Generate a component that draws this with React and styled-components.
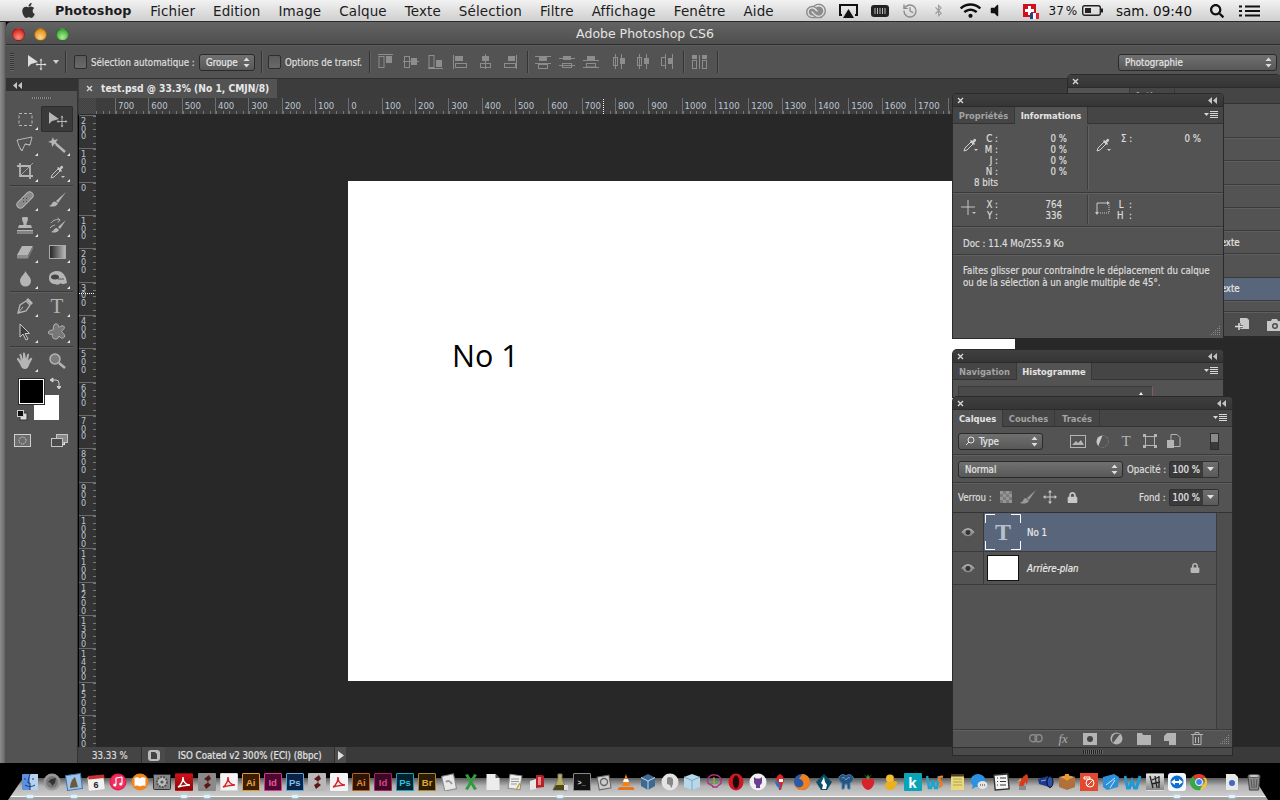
import styled, { createGlobalStyle, css } from "styled-components";
import { FaApple, FaWifi, FaBluetoothB, FaVolumeOff, FaSearch, FaLock } from "react-icons/fa";
import { SiAdobecreativecloud } from "react-icons/si";
import { History } from "lucide-react";

const ui = `"DejaVu Sans", "Liberation Sans", sans-serif`;
const panelText = `"DejaVu Sans Condensed", "DejaVu Sans", sans-serif`;
const ink = css`
  font: 9.65px ${panelText};
  -webkit-text-stroke: 0.2px currentColor;
`;

const GlobalStyle = createGlobalStyle`
  html, body { margin: 0; padding: 0; background: #000; }
  * { box-sizing: border-box; }
  svg { display: block; flex: none; }
`;

const Page = styled.div`
  position: relative;
  width: 1280px;
  height: 800px;
  overflow: hidden;
  display: flex;
  flex-direction: column;
  background: #000;
  font-family: ${panelText};
`;

/* ---------- mac menu bar ---------- */
const MenuBar = styled.div`
  flex: 0 0 22px;
  display: flex;
  align-items: center;
  padding: 0 20px;
  background: linear-gradient(#f2f2f2, #cfcfcf);
  border-bottom: 1px solid #2a2a2a;
  color: #1c1c1c;
  font: 13.5px ${ui};
`;
const MenuList = styled.div`
  display: flex;
  gap: 18px;
  margin-left: 18px;
  letter-spacing: 0.1px;
`;
const AppName = styled.b`
  font-size: 12.7px;
  letter-spacing: 0;
  margin-right: 1px;
`;
const Tray = styled.div`
  margin-left: auto;
  display: flex;
  align-items: center;
`;
const TrayItem = styled.div`
  position: relative;
  display: flex;
  align-items: center;
  margin-left: ${(p) => p.$gap}px;
  color: ${(p) => p.$color || "#111"};
`;
const Percent = styled.span`
  font-size: 12px;
  word-spacing: -2px;
`;
const Flag = styled.div`
  position: relative;
  width: 13px;
  height: 13px;
  background: #d0101c;
  &::before {
    content: "";
    position: absolute;
    left: 2px;
    top: 5px;
    width: 9px;
    height: 3px;
    background: #fff;
  }
  &::after {
    content: "";
    position: absolute;
    left: 5px;
    top: 2px;
    width: 3px;
    height: 9px;
    background: #fff;
  }
`;
const MiniFlag = styled.div`
  position: absolute;
  left: 7px;
  top: 9px;
  width: 9px;
  height: 6px;
  background: linear-gradient(90deg, #25408f 33%, #fff 33%, #fff 66%, #e0202c 66%);
`;

/* ---------- photoshop window ---------- */
const Desktop = styled.div`
  flex: 0 0 741px;
  display: flex;
  min-height: 0;
`;
const Edge = styled.div`
  flex: 0 0 6px;
  background: linear-gradient(90deg, #8d8d8d, #6e6e6e 70%, #4a4a4a);
`;
const Window = styled.div`
  flex: 1;
  min-width: 0;
  display: flex;
  flex-direction: column;
  border-top-left-radius: 5px;
  overflow: hidden;
`;
const TitleBar = styled.div`
  position: relative;
  flex: 0 0 23px;
  display: flex;
  align-items: center;
  justify-content: center;
  padding-left: 4px;
  background: linear-gradient(#636363, #4f4f4f);
  border-bottom: 1px solid #2c2c2c;
  color: #e4e4e4;
  font: 12.5px ${ui};
`;
const Lights = styled.div`
  position: absolute;
  left: 6px;
  top: 6px;
  display: flex;
  gap: 9px;
`;
const Light = styled.div`
  width: 13px;
  height: 13px;
  border-radius: 50%;
  border: 1px solid rgba(0, 0, 0, 0.35);
  background: radial-gradient(circle at 50% 75%, ${(p) => p.$c1}, ${(p) => p.$c2} 75%);
`;
const OptionsBar = styled.div`
  flex: 0 0 34px;
  display: flex;
  align-items: center;
  background: #535353;
  border-bottom: 1px solid #2f2f2f;
  border-top: 1px solid #5e5e5e;
  color: #dedede;
  padding-left: 4px;
  ${ink}
`;
const Grip = styled.div`
  width: 4px;
  height: 18px;
  margin-right: 12px;
  background: repeating-linear-gradient(#333 0 1px, #666 1px 2px);
`;
const DownArrow = styled.svg`
  margin-left: 6px;
`;
const OptSep = styled.div`
  width: 1px;
  height: 22px;
  background: #333;
  box-shadow: 1px 0 0 #616161;
  margin: 0 ${(p) => p.$right ?? 6}px 0 ${(p) => p.$left ?? 6}px;
`;
const Check = styled.div`
  width: 13px;
  height: 14px;
  border-radius: 2px;
  background: linear-gradient(#5a5a5a, #6a6a6a);
  border: 1px solid #2e2e2e;
  margin-right: 4px;
`;
const OptLabel = styled.div`
  width: ${(p) => p.$w}px;
  white-space: nowrap;
`;
const Select = styled.div`
  display: flex;
  align-items: center;
  justify-content: space-between;
  width: ${(p) => p.$w}px;
  height: 17px;
  margin-left: ${(p) => p.$ml ?? "0"};
  margin-right: ${(p) => p.$mr ?? "0"};
  padding: 0 4px 0 6px;
  border-radius: 3px;
  border: 1px solid #2a2a2a;
  background: linear-gradient(#707070, #585858);
  color: #e6e6e6;
  ${ink}
`;
const IconGroup = styled.div`
  display: flex;
  gap: ${(p) => p.$gap}px;
  margin-left: ${(p) => p.$ml ?? 0}px;
`;
const Stepper = () => (
  <svg width="7" height="11" viewBox="0 0 7 11">
    <path d="M3.5 0.5 6.5 4H.5zM3.5 10.5 .5 7h6z" fill="#dcdcdc" />
  </svg>
);

const Workspace = styled.div`
  flex: 1;
  min-height: 0;
  display: flex;
`;
const Toolbox = styled.div`
  flex: 0 0 72px;
  display: flex;
  flex-direction: column;
  background: #535353;
  border-right: 1px solid #333;
`;
const ToolHead = styled.div`
  flex: 0 0 12px;
  display: flex;
  align-items: center;
  padding-left: 7px;
  background: #333;
`;
const ToolGrip = styled.div`
  width: 20px;
  height: 2px;
  margin: 6px auto 7px;
  background: repeating-linear-gradient(90deg, #8a8a8a 0 1px, #444 1px 2px);
`;
const ToolGrid = styled.div`
  display: grid;
  grid-template-columns: repeat(2, 32px);
  grid-auto-rows: 26px;
  justify-content: center;
  margin-left: -1px;
`;
const ToolDivider = styled.div`
  height: 1px;
  margin: ${(p) => p.$mt ?? 2}px 4px ${(p) => p.$mb ?? 3}px;
  background: #393939;
  box-shadow: 0 1px 0 #5e5e5e;
`;
const Tool = styled.div`
  position: relative;
  display: flex;
  align-items: center;
  justify-content: center;
  color: #b5b5b5;
  border-radius: 2px;
  ${(p) => p.$on && "background:#3a3a3a; box-shadow: inset 0 0 0 1px #2e2e2e;"}
  ${(p) =>
    p.$more &&
    `&::after {
      content: "";
      position: absolute;
      right: 3px;
      bottom: 2px;
      border-left: 3px solid transparent;
      border-bottom: 3px solid #e8e8e8;
    }`}
`;
const SerifT = styled.span`
  font: ${(p) => (p.$bold ? "bold " : "")}${(p) => p.$size ?? 21}px "Liberation Serif", serif;
  color: ${(p) => p.$color || "#b5b5b5"};
  line-height: 1;
  -webkit-text-stroke: 0;
`;
const Swatches = styled.div`
  position: relative;
  height: 49px;
  margin-top: 4px;
`;
const Swatch = styled.div`
  position: absolute;
  left: ${(p) => p.$x}px;
  top: ${(p) => p.$y}px;
  width: 25px;
  height: 25px;
  background: ${(p) => p.$c};
  border: 1px solid #fff;
  box-shadow: ${(p) => (p.$c === "#000" ? "0 0 0 1px #2a2a2a" : "none")};
`;
const SwatchMark = styled.div`
  position: absolute;
  left: ${(p) => p.$x}px;
  top: ${(p) => p.$y}px;
`;
const ModeRow = styled.div`
  display: flex;
  justify-content: space-between;
  padding: 0 9px 0 8px;
  margin-top: 7px;
`;

const Main = styled.div`
  flex: 1;
  min-width: 0;
  display: flex;
  flex-direction: column;
`;
const DocTabs = styled.div`
  flex: 0 0 19px;
  display: flex;
  background: #3c3c3c;
  padding-left: 1px;
`;
const DocTab = styled.div`
  width: 198px;
  display: flex;
  align-items: center;
  padding-left: 7px;
  gap: 8px;
  background: #535353;
  color: #e8e8e8;
  font: bold 10.2px ${panelText};
  white-space: nowrap;
`;
const HRuler = styled.div`
  position: relative;
  flex: 0 0 17px;
  display: flex;
  overflow: hidden;
  background: #3d3d3d;
  border-bottom: 1px solid #2a2a2a;
`;
const Corner = styled.div`
  flex: 0 0 17px;
  margin-left: 1px;
  background: repeating-conic-gradient(#4c4c4c 0 25%, #404040 0 50%) 0 0 / 2px 2px;
`;
const HCell = styled.div`
  flex: 0 0 ${(p) => p.$w ?? 33.33}px;
  height: 100%;
  padding: 2px 0 0 2px;
  border-left: ${(p) => (p.$bare ? "0" : "1px solid #6f6f6f")};
  background: repeating-linear-gradient(90deg, #777 0 1px, transparent 1px 6.66px) 0 100% / 100% 3px no-repeat;
  color: #bcc6d4;
  font: 9.5px/11px ${panelText};
  white-space: nowrap;
`;
const Body = styled.div`
  flex: 1;
  min-height: 0;
  display: flex;
`;
const VRuler = styled.div`
  position: relative;
  flex: 0 0 17px;
  margin-left: 1px;
  overflow: hidden;
  background: #333;
`;
const VCell = styled.div`
  height: 33.33px;
  padding: 2px 0 0 2px;
  border-top: 1px solid #6a6a6a;
  background: repeating-linear-gradient(#777 0 1px, transparent 1px 6.66px) 100% 0 / 3px 100% no-repeat;
  color: #bcc6d4;
  font: 9px/7.7px ${panelText};
`;
const Digit = styled.div`
  height: 7.7px;
`;
const Canvas = styled.div`
  flex: 1;
  min-width: 0;
  background: #282828;
  padding: 66px 0 0 252px;
  overflow: hidden;
`;
const Sheet = styled.div`
  width: 667px;
  height: 500px;
  background: #fff;
  padding: 155px 0 0 104px;
  color: #000;
  font: 30.5px/38px "Open Sans", sans-serif;
`;
const Marker = styled.div`
  position: absolute;
  left: ${(p) => p.$x}px;
  top: ${(p) => p.$y}px;
  width: ${(p) => p.$w}px;
  height: ${(p) => p.$h}px;
  background: repeating-linear-gradient(${(p) => (p.$w > 1 ? "90deg" : "0deg")}, #fff 0 1px, #333 1px 2px);
`;
const StatusBar = styled.div`
  flex: 0 0 16px;
  display: flex;
  align-items: center;
  background: #3a3a3a;
  color: #dadada;
  ${ink}
`;
const Zoom = styled.div`
  width: 64px;
  padding-left: 14px;
  height: 100%;
  display: flex;
  align-items: center;
  background: #444;
  border-right: 1px solid #2d2d2d;
`;
const StatusBtn = styled.div`
  width: ${(p) => p.$w}px;
  height: 100%;
  display: flex;
  align-items: center;
  justify-content: center;
  background: ${(p) => p.$bg || "#4a4a4a"};
`;
const StatusText = styled.div`
  width: 170px;
  padding-left: 13px;
  height: 100%;
  display: flex;
  align-items: center;
  background: #444;
  border-right: 1px solid #2d2d2d;
  color: #e2e2e2;
  white-space: nowrap;
`;

/* ---------- floating panels ---------- */
const Float = styled.div`
  position: absolute;
  left: ${(p) => p.$x}px;
  top: ${(p) => p.$y}px;
  width: ${(p) => p.$w}px;
  height: ${(p) => p.$h}px;
  display: flex;
  flex-direction: column;
  background: #535353;
  border-radius: 4px 4px 0 0;
  box-shadow: 0 0 0 1px #2a2a2a;
  color: #dcdcdc;
  overflow: hidden;
  ${ink}
`;
const PanelTitle = styled.div`
  flex: 0 0 13px;
  display: flex;
  align-items: center;
  justify-content: space-between;
  padding: 0 6px 0 4px;
  background: linear-gradient(#3f3f3f, #353535);
  border-bottom: 1px solid #2b2b2b;
`;
const TabBar = styled.div`
  flex: 0 0 ${(p) => p.$h ?? 17}px;
  display: flex;
  align-items: stretch;
  background: #454545;
  border-bottom: 1px solid #333;
  font: bold 9.3px ${panelText};
  -webkit-text-stroke: 0;
`;
const Tab = styled.div`
  position: relative;
  width: ${(p) => p.$w}px;
  display: flex;
  align-items: center;
  justify-content: center;
  color: ${(p) => (p.$on ? "#e4e4e4" : "#a3a3a3")};
  background: ${(p) => (p.$on ? "#535353" : "transparent")};
  border-right: 1px solid #383838;
  margin-bottom: ${(p) => (p.$on ? "-1px" : "0")};
`;
const TabMenu = styled.div`
  margin-left: auto;
  align-self: center;
  padding-right: 4px;
`;
const InfoSection = styled.div`
  position: relative;
  height: ${(p) => p.$h}px;
  display: flex;
  border-bottom: 1px solid #3a3a3a;
  box-shadow: 0 1px 0 #606060;
`;
const InfoCell = styled.div`
  width: ${(p) => p.$w}px;
  display: flex;
  padding: ${(p) => p.$pad};
  ${(p) => p.$div && "border-right: 1px solid #3d3d3d; box-shadow: 1px 0 0 #616161; margin: 2px 0;"}
`;
const IconSlot = styled.div`
  flex: 0 0 ${(p) => p.$w}px;
  min-width: 0;
  padding-top: ${(p) => p.$top ?? 0}px;
`;
const InfoRows = styled.div`
  display: grid;
  grid-template-columns: ${(p) => p.$cols};
  grid-auto-rows: 11px;
  line-height: 11px;
  flex: 1;
`;
const Lab = styled.div`
  text-align: right;
  white-space: pre;
`;
const Val = styled.div`
  text-align: right;
`;
const DocLine = styled.div`
  padding: 11px 0 0 10px;
`;
const HelpText = styled.div`
  padding: 10px 0 0 10px;
  line-height: 12px;
`;
const ResizeGrip = styled.div`
  position: absolute;
  right: 2px;
  bottom: ${(p) => p.$bottom ?? 2}px;
`;
const Rows = styled.div`
  flex: 0 0 auto;
`;
const HistRow = styled.div`
  height: ${(p) => p.$h ?? 23.3}px;
  border-bottom: 1px solid #3a3a3a;
  box-shadow: 0 1px 0 #5f5f5f;
  display: flex;
  align-items: center;
  padding-left: 149px;
  background: ${(p) => (p.$on ? "#58657a" : "transparent")};
  color: #e6e6e6;
`;
const BackFoot = styled.div`
  flex: 1;
  display: flex;
  align-items: center;
  gap: 17px;
  margin-top: 10px;
  padding-left: 167px;
  border-top: 1px solid #3a3a3a;
  box-shadow: inset 0 1px 0 #5f5f5f;
  background: #4c4c4c;
  color: #c8c8c8;
`;
const HistBox = styled.div`
  position: relative;
  width: 195px;
  height: 40px;
  margin: 6px 0 0 5px;
  border: 1px solid #3a3a3a;
  border-right-color: #8a5a5a;
  background: #4a4a4a;
  &::after {
    content: "";
    position: absolute;
    right: 9px;
    top: 5px;
    border-left: 2px solid transparent;
    border-right: 2px solid transparent;
    border-bottom: 3px solid #eee;
  }
`;
const LayerRow = styled.div`
  display: flex;
  align-items: center;
  height: ${(p) => p.$h}px;
  padding: ${(p) => (p.$line ? "1px" : "0")} 13px 0 5px;
  ${(p) => p.$line && "border-bottom: 1px solid #3a3a3a; box-shadow: 0 1px 0 #5f5f5f;"}
`;
const FilterIcons = styled.div`
  display: flex;
  align-items: center;
  margin-left: 23px;
`;
const FilterCell = styled.div`
  width: 24px;
  display: flex;
  justify-content: center;
`;
const SearchGlyph = styled.svg`
  margin-right: 4px;
`;
const SelectName = styled.span`
  flex: 1;
`;
const FilterToggle = styled.div`
  width: 9px;
  height: 17px;
  margin-left: auto;
  border: 1px solid #2e2e2e;
  background: linear-gradient(#8a8a8a 0 50%, #3a3a3a 50%);
`;
const FieldLabel = styled.div`
  margin-left: ${(p) => p.$ml ?? "4px"};
  white-space: nowrap;
  width: ${(p) => p.$w}px;
`;
const Field = styled.div`
  display: flex;
  width: 50px;
  height: 17px;
  margin-left: 3px;
  background: #3a3a3a;
  border: 1px solid #303030;
  border-radius: 2px;
  color: #e6e6e6;
`;
const FieldVal = styled.div`
  flex: 1;
  text-align: right;
  padding-right: 3px;
  line-height: 15px;
  white-space: nowrap;
`;
const FieldBtn = styled.div`
  flex: 0 0 15px;
  display: flex;
  align-items: center;
  justify-content: center;
  background: linear-gradient(#6e6e6e, #5a5a5a);
`;
const LockIcons = styled.div`
  display: flex;
  align-items: center;
  margin-left: 2px;
`;
const LockCell = styled.div`
  width: 22px;
  display: flex;
  justify-content: center;
`;
const ListArea = styled.div`
  flex: 1;
  min-height: 0;
  display: flex;
  border-top: 1px solid #333;
  margin-top: 1px;
`;
const List = styled.div`
  flex: 0 0 264px;
  border-right: 1px solid #3c3c3c;
`;
const Track = styled.div`
  flex: 1;
  background: #4e4e4e;
`;
const Layer = styled.div`
  display: flex;
  height: ${(p) => p.$h}px;
  border-bottom: 1px solid #3a3a3a;
  align-items: stretch;
`;
const EyeCol = styled.div`
  flex: 0 0 31px;
  display: flex;
  justify-content: center;
  padding-top: ${(p) => p.$top}px;
  border-right: 1px solid #3a3a3a;
`;
const LayerMain = styled.div`
  flex: 1;
  display: flex;
  align-items: center;
  gap: ${(p) => p.$gap}px;
  padding-left: ${(p) => p.$pad}px;
  color: #eaeaea;
  background: ${(p) => p.$bg || "transparent"};
  ${(p) => p.$italic && "font-style: italic;"}
`;
const Thumb = styled.div`
  position: relative;
  width: ${(p) => p.$w}px;
  height: ${(p) => p.$h}px;
  display: flex;
  align-items: center;
  justify-content: center;
  background: ${(p) => p.$bg};
  ${(p) => p.$line && "border: 1px solid #111;"}
`;
const Brackets = styled.svg`
  position: absolute;
  inset: 0;
`;
const LayerLock = styled.div`
  margin-left: auto;
  margin-right: 16px;
  color: #b8b8b8;
`;
const LayerFoot = styled.div`
  flex: 0 0 18px;
  display: flex;
  align-items: center;
  border-top: 1px solid #3a3a3a;
  box-shadow: inset 0 1px 0 #616161;
  padding-left: 70px;
`;
const FootCell = styled.div`
  width: 26.8px;
  display: flex;
  justify-content: center;
`;
const FootFx = styled.span`
  font: italic 13px "Liberation Serif", serif;
  -webkit-text-stroke: 0;
  color: #ababab;
`;
const Handle = styled.div`
  flex: 0 0 8px;
  display: flex;
  align-items: center;
  justify-content: center;
  border-top: 1px solid #2f2f2f;
  background: #4a4a4a;
  &::after {
    content: "";
    width: 20px;
    height: 4px;
    background: repeating-linear-gradient(90deg, #222 0 1px, #666 1px 2px);
  }
`;

/* ---------- dock ---------- */
const Dock = styled.div`
  position: relative;
  flex: 1;
  display: flex;
  align-items: flex-start;
  gap: 4.07px;
  padding: 10px 0 0 21px;
  background: #000;
`;
const Shelf = styled.div`
  position: absolute;
  left: 8px;
  right: 12px;
  top: 15px;
  height: 22px;
  background: linear-gradient(#5a5a5a, #b4b4b4 8px, #cccccc 18px, #f8f8f8 18px, #f8f8f8 19px, #a0a0a0 19px);
  clip-path: polygon(1.2% 0, 98.9% 0, 100% 100%, 0 100%);
`;
const Dk = styled.div`
  position: relative;
  z-index: 1;
  flex: 0 0 18px;
  height: 18px;
  margin-left: ${(p) => p.$ml ?? 0}px;
  &::after {
    content: "";
    display: ${(p) => (p.$run ? "block" : "none")};
    position: absolute;
    left: 6px;
    bottom: -7px;
    width: 6px;
    height: 3px;
    background: #dff4ff;
    box-shadow: 0 0 3px #bfe8ff;
  }
`;
const Tile = styled.div`
  width: 18px;
  height: 18px;
  display: flex;
  align-items: center;
  justify-content: center;
  border: 1.5px solid ${(p) => p.$line || "transparent"};
  background: ${(p) => p.$bg};
  color: ${(p) => p.$color || "#fff"};
  font: bold ${(p) => p.$fs || 9.5}px "Liberation Sans", sans-serif;
  border-radius: ${(p) => p.$r ?? 1}px;
`;

/* ---------- drawn icons ---------- */
const CloseX = () => (
  <svg width="7" height="7" viewBox="0 0 7 7">
    <path d="M1 1 6 6M6 1 1 6" stroke="#d6d6d6" strokeWidth="1.4" />
  </svg>
);
const Collapse = () => (
  <svg width="9" height="7" viewBox="0 0 9 7">
    <path d="M4 0 0 3.5 4 7zM9 0 5 3.5 9 7z" fill="#c4c4c4" />
  </svg>
);
const MenuGlyph = () => (
  <svg width="15" height="8" viewBox="0 0 15 8">
    <path d="M0 2h5L2.5 5z" fill="#d8d8d8" />
    <path d="M6 .5h8M6 2.5h8M6 4.5h8M6 6.5h8" stroke="#d8d8d8" />
  </svg>
);
const GripDots = () => (
  <svg width="10" height="10" viewBox="0 0 10 10" fill="#8a8a8a">
    {[[8, 0], [6, 2], [8, 2], [4, 4], [6, 4], [8, 4], [2, 6], [4, 6], [6, 6], [8, 6], [0, 8], [2, 8], [4, 8], [6, 8], [8, 8]].map(([x, y]) => (
      <rect key={`${x}-${y}`} x={x} y={y} width="1" height="1" />
    ))}
  </svg>
);
const Dropper = ({ c = "#d0d0d0" }) => (
  <svg width="17" height="17" viewBox="0 0 17 17">
    <path d="M2 15 3 12 9 6 11 8 5 14z" fill="none" stroke={c} />
    <path d="M9 4 10.5 5 12 3a1.5 1.5 0 0 1 2 2l-2 1.5L13 8 12 9 8 5z" fill={c} />
    <path d="M12 13h4l-2 2z" fill={c} />
  </svg>
);
const Plus = () => (
  <svg width="17" height="17" viewBox="0 0 17 17">
    <path d="M8 1v15M1 8h14" stroke="#c4c4c4" />
    <path d="M12 13h4l-2 2z" fill="#c4c4c4" />
  </svg>
);
const SizeGlyph = () => (
  <svg width="17" height="17" viewBox="0 0 17 17" fill="none">
    <path d="M2 14V4h11" stroke="#c8c8c8" />
    <path d="M12 2l3 2-3 2zM0 13h4l-2 3z" fill="#c8c8c8" />
    <path d="M14 6v8H5" stroke="#c8c8c8" strokeDasharray="1 1" />
  </svg>
);
const Eye = () => (
  <svg width="14" height="9" viewBox="0 0 14 9">
    <path d="M1 4.5C3 1.5 5 .8 7 .8s4 .7 6 3.7C11 7.5 9 8.2 7 8.2s-4-.7-6-3.7z" fill="#8f8f8f" />
    <circle cx="7" cy="4.5" r="2.4" fill="#333" />
    <path d="M1 4.5C3 1.5 5 .8 7 .8s4 .7 6 3.7" fill="none" stroke="#c8c8c8" />
  </svg>
);
const FieldArrow = () => (
  <svg width="7" height="4" viewBox="0 0 7 4">
    <path d="M0 0h7L3.500 4z" fill="#e0e0e0" />
  </svg>
);

const g = "currentColor";
const toolIcons = {
  marquee: <svg width="17" height="17" viewBox="0 0 17 17"><rect x="2" y="2.5" width="13" height="12" fill="none" stroke={g} strokeDasharray="3 2" /></svg>,
  move: (
    <svg width="21" height="17" viewBox="0 0 21 17">
      <path d="M2 1v12l3-3 2-.5 5-1.5z" fill={g} />
      <path d="M15 6v9M11 10.500h8" stroke={g} />
      <path d="M15 4.500 13.500 6.500h3zM15 16.500 13.500 14.500h3zM9.500 10.500 11.500 9v3zM20.500 10.500 18.500 9v3z" fill={g} />
    </svg>
  ),
  lasso: <svg width="19" height="18" viewBox="0 0 19 18" fill="none" stroke={g}><path d="M1 4 16 1 14 9 9 8 6 15 3 10zM6 15 4 12.500M9 8 14 9" /></svg>,
  wand: (
    <svg width="20" height="18" viewBox="0 0 20 18">
      <path d="M9 8 18 16" stroke={g} strokeWidth="2.400" />
      <path d="M6 1 7 4 11 3 9 6 11 9 7.500 8 5 11 4.500 7 1 6 4.500 4.500z" fill={g} />
    </svg>
  ),
  crop: <svg width="18" height="18" viewBox="0 0 18 18" fill="none" stroke={g} strokeWidth="1.800"><path d="M4 1v13h13M1 4h13v13" /><path d="M4 14 17 1" strokeWidth=".8" /></svg>,
  dropper: <Dropper c="#c4c4c4" />,
  bandaid: (
    <svg width="18" height="18" viewBox="0 0 18 18">
      <rect x="-1" y="5.500" width="20" height="7" rx="3.500" fill="#8a8a8a" stroke={g} transform="rotate(-45 9 9)" />
      <path d="M7 7h1v1H7zM10 7h1v1h-1zM7 10h1v1H7zM10 10h1v1h-1z" fill="#444" />
    </svg>
  ),
  brush: (
    <svg width="19" height="18" viewBox="0 0 19 18">
      <path d="M18 1 8 10l2 2z" fill={g} />
      <path d="M7 10.500c-2 0-3 1.500-3.500 3L1 15c3 1 7 1 9-2.500z" fill={g} />
    </svg>
  ),
  stamp: (
    <svg width="18" height="18" viewBox="0 0 18 18" fill={g}>
      <path d="M6 2a3 3 0 0 1 6 0c0 2-1.500 3-1.500 5v1H15l1 3H2l1-3h4.500V7C7.500 5 6 4 6 2z" />
      <rect x="1" y="13" width="16" height="1.500" />
      <rect x="1" y="15.500" width="16" height="1" />
    </svg>
  ),
  history: (
    <svg width="19" height="18" viewBox="0 0 19 18">
      <path d="M18 3 10 10l2 2z" fill={g} />
      <path d="M9 11c-2 0-3 1-3.500 2.500L3 15c3 1 6 1 8-2z" fill={g} />
      <path d="M3 6c2-3 6-4 9-3M12 3 9.500 1M12 3 10 5.500M2 11c1-1.500 3-2.500 5-3" fill="none" stroke={g} />
    </svg>
  ),
  eraser: <svg width="18" height="15" viewBox="0 0 18 15"><path d="M6 1h11l-5 9H1z" fill={g} /><path d="M1 10h11v3.500H1z" fill="#8c8c8c" /><path d="M12 10v3.500L17 4V1z" fill="#777" /></svg>,
  gradient: (
    <svg width="17" height="14" viewBox="0 0 17 14">
      <defs>
        <linearGradient id="grd">
          <stop offset="0" stopColor="#222" />
          <stop offset="1" stopColor="#bbb" />
        </linearGradient>
      </defs>
      <rect x=".5" y=".5" width="16" height="13" fill="url(#grd)" stroke="#aaa" />
    </svg>
  ),
  drop: <svg width="13" height="17" viewBox="0 0 13 17"><path d="M6.500 1c1 3 5.500 6 5.500 10a5.500 5.500 0 0 1-11 0c0-4 4.500-7 5.500-10z" fill={g} /></svg>,
  sponge: (
    <svg width="21" height="16" viewBox="0 0 21 16">
      <path d="M2 8c0-5 4-7 8-7 5 0 7 3 9 7l1 5c-3 1-5 2-6 0-2 2-5 2-6 1-3 0-6-2-6-6z" fill={g} />
      <ellipse cx="8" cy="7" rx="4" ry="2.500" fill="#444" />
      <path d="M11 9h6" stroke="#555" />
    </svg>
  ),
  pen: (
    <svg width="18" height="18" viewBox="0 0 18 18">
      <path d="M2 16 4 8 10 4l4 4-4 6z" fill="none" stroke={g} strokeWidth="1.300" />
      <path d="M2 16 7 10" stroke={g} />
      <path d="M10 3 12 1l5 5-2 2z" fill={g} />
    </svg>
  ),
  path: <svg width="15" height="18" viewBox="0 0 15 18"><path d="M2 1v13l3-3 3 6 2-1-3-5.500h4.500z" fill="#3c3c3c" stroke="#c8c8c8" /></svg>,
  shape: <svg width="20" height="18" viewBox="0 0 20 18"><path d="M8 1c2-1 4 1 3.500 3 1.500.5 3-2 5-1 2 1.500 0 4-2 5 .5 2 4 3 3 6-1.500 2-4.500 1-5.500-1-.5 1.500-1 3-3 3-4 0-4-3-3.500-5C3 12 1 11 1.500 9 2 7 5 7.500 6.500 6.500 6 4.500 6.500 2 8 1z" fill="#777" stroke={g} /></svg>,
  hand: <svg width="18" height="18" viewBox="0 0 18 18"><path d="M4 12 1 7.500c-.5-1 1-2 2-1L5 9 3.500 3c-.3-1.200 1.400-1.800 1.900-.5L7 7.500 7 1.500c0-1.300 1.800-1.300 2 0L10 7l1.200-4.500c.3-1.200 2-.9 1.800.4L12 8.500l2.500-2.500c1-1 2.300.2 1.500 1.300L13 13c-.5 2-1.500 4-4 4s-4-1.500-5-5z" fill={g} /></svg>,
  zoom: (
    <svg width="18" height="18" viewBox="0 0 18 18">
      <circle cx="7" cy="7" r="5" fill="#7c7c7c" stroke={g} strokeWidth="1.500" />
      <path d="M11 11 17 16" stroke={g} strokeWidth="2.500" />
    </svg>
  ),
};

const toolRows = [
  [["marquee", 1], ["move", 0, 1]],
  [["lasso", 1], ["wand", 1]],
  [["crop", 1], ["dropper", 1]],
];
const toolRows2 = [
  [["bandaid", 1], ["brush", 1]],
  [["stamp", 1], ["history", 1]],
  [["eraser", 1], ["gradient", 1]],
  [["drop", 1], ["sponge", 1]],
];
const toolRows3 = [
  [["pen", 1], ["T", 1]],
  [["path", 1], ["shape", 1]],
];
const toolRows4 = [[["hand", 1], ["zoom", 0]]];

const Tools = ({ rows }) => (
  <ToolGrid>
    {rows.flat().map(([name, more, on]) => (
      <Tool key={name} $more={more} $on={on}>
        {name === "T" ? <SerifT>T</SerifT> : toolIcons[name]}
      </Tool>
    ))}
  </ToolGrid>
);

/* option bar align buttons, l = line, o = outlined box, f = filled box */
const alignSet = [
  [["l", 0, 0.5, 15, 0.5], ["o", 1, 2.5, 5, 11], ["f", 8, 2, 6, 7]],
  [["l", 0, 7.5, 16, 7.5], ["o", 1.5, 2.5, 5, 11], ["f", 8, 4, 6, 7]],
  [["l", 0, 14.5, 15, 14.5], ["o", 1, 1.5, 5, 12], ["f", 8, 6, 6, 7]],
  [["l", 0.5, 1, 0.5, 15], ["f", 2, 2, 8, 5], ["o", 2.5, 9.5, 11, 4]],
  [["l", 7.5, 0, 7.5, 15], ["f", 4, 2, 7, 5], ["o", 2.5, 9.500, 10, 4]],
  [["l", 13.5, 1, 13.5, 15], ["f", 5, 2, 7, 5], ["o", 1.5, 9.5, 11, 4]],
];
const distH = [
  [["l", 0, 2.5, 16, 2.5], ["f", 4, 3, 8, 4], ["l", 0, 9.5, 16, 9.5], ["o", 3.5, 10.5, 9, 4]],
  [["l", 0, 4.5, 16, 4.5], ["f", 4, 2, 8, 4], ["l", 0, 11.5, 16, 11.5], ["o", 3.5, 9.5, 9, 4]],
  [["l", 0, 6.5, 16, 6.5], ["f", 4, 2, 8, 4], ["l", 0, 13.5, 16, 13.5], ["o", 3.5, 9.5, 9, 3.500]],
];
const distV = [
  [["l", 2.5, 0, 2.5, 15], ["o", 0.5, 3.5, 4, 8], ["f", 7, 4, 5, 6], ["l", 8.5, 0, 8.5, 15]],
  [["l", 2.5, 0, 2.5, 15], ["o", 0.5, 3.5, 4, 8], ["f", 7, 4, 5, 6], ["l", 9.5, 0, 9.5, 15]],
  [["l", 4.5, 0, 4.5, 15], ["o", 0.5, 3.5, 4, 8], ["f", 7, 4, 5, 6], ["l", 11.5, 0, 11.5, 15]],
];
const AlignIcon = ({ parts }) => (
  <svg width="16" height="16" viewBox="0 0 16 16">
    {parts.map(([t, a, b, c, d], i) =>
      t === "l" ? (
        <line key={i} x1={a} y1={b} x2={c} y2={d} stroke="#8d8d8d" />
      ) : t === "o" ? (
        <rect key={i} x={a} y={b} width={c} height={d} fill="none" stroke="#8d8d8d" />
      ) : (
        <rect key={i} x={a} y={b} width={c} height={d} fill="#8d8d8d" />
      )
    )}
  </svg>
);

/* ---------- dock icon set ---------- */
const Svg = ({ children }) => <svg width="18" height="18" viewBox="0 0 18 18">{children}</svg>;
const pdfCurve = (c) => <path d="M3 14c3-2 5-6 5-10 0 5 3 8 7 8-4 0-8 1-12 2z" fill="none" stroke={c} strokeWidth="1.400" />;
const sMark = <path d="M11 2 6 6l5 3-5 3 2 4 5-4-4-3 4-3z" fill="#5c1616" />;
const dockIcons = [
  { run: 1, el: <Svg><rect x="1" y="1" width="16" height="16" rx="1" fill="#5d90dd" /><path d="M9 1h8v16H9z" fill="#b6d2ef" /><path d="M9 1c-1 4-2 6-2 9h2v7" fill="none" stroke="#173a78" /><path d="M4 5v2M12 5v2M4 12c3 2 7 2 10 0" stroke="#173a78" fill="none" /></Svg> },
  { el: <Svg><circle cx="9" cy="9" r="8.500" fill="#999" /><circle cx="9" cy="9" r="6" fill="#777" /><path d="M13 5 8 6 5 9l2 .5 1.500 1.500L9 13l3-3z" fill="#333" /></Svg> },
  { run: 1, el: <Svg><rect x="1.500" y="1.500" width="15" height="15" fill="#9ec2e8" stroke="#3f74b5" transform="rotate(-8 9 9)" /><path d="M5 15c0-4 2-9 5-11l3 10z" fill="#6b5a3a" /></Svg> },
  { el: <Svg><rect x="1" y="3" width="16" height="14" rx="1" fill="#f1f1f1" transform="rotate(-6 9 9)" /><path d="M1 3l16-1.500.500 3.500-16 1.500z" fill="#c93030" /><text x="9" y="15" fontSize="9" fontWeight="bold" textAnchor="middle" fill="#222" fontFamily="Liberation Sans">6</text></Svg> },
  { el: <Svg><circle cx="9" cy="9" r="8.500" fill="#e81c4f" /><circle cx="9" cy="9" r="7" fill="#f03060" /><path d="M7 5v6.500M13 4v6.500M7 5l6-1" stroke="#fff" strokeWidth="1.200" fill="none" /><circle cx="5.800" cy="12" r="1.600" fill="#fff" /><circle cx="11.800" cy="11" r="1.600" fill="#fff" /></Svg> },
  { el: <Svg><circle cx="9" cy="9" r="8.500" fill="#f0851c" /><path d="M3.500 5c2-1 4-1 5.500 .5C10.500 4 12.500 4 14.500 5v8c-2-1-4-.5-5.500 .5C7.500 12.500 5.500 12 3.500 13z" fill="#fff" /></Svg> },
  { el: <Svg><rect x=".5" y="1.500" width="17" height="15" rx="1" fill="#888" stroke="#333" /><circle cx="9" cy="9" r="5" fill="#bbb" stroke="#555" strokeWidth="2" strokeDasharray="2 1" /><circle cx="9" cy="9" r="1.600" fill="#555" /></Svg> },
  { run: 1, el: <Tile $bg="linear-gradient(#d0121a,#8a0508)"><Svg>{pdfCurve("#fff")}</Svg></Tile> },
  { run: 1, el: <Tile $bg="#8a8a8a"><Svg>{sMark}</Svg></Tile> },
  { el: <Tile $bg="#f4f4f4" $line="#d8d8d8"><Svg>{pdfCurve("#d8232a")}</Svg></Tile> },
  { el: <Tile $bg="#3c1e05" $line="#e49a2c" $color="#f0a93c">Ai</Tile> },
  { el: <Tile $bg="#4a0a30" $line="#e0348a" $color="#f050a0">Id</Tile> },
  { run: 1, el: <Tile $bg="#0c2346" $line="#5aa8e0" $color="#7cc4f0">Ps</Tile> },
  { el: <Tile $bg="#b8b8b8"><Svg>{sMark}</Svg></Tile> },
  { el: <Tile $bg="#f4f4f4"><Svg>{pdfCurve("#d8232a")}</Svg></Tile> },
  { el: <Tile $bg="#2e1505" $line="#b5621c" $color="#e08a30">Ai</Tile> },
  { el: <Tile $bg="#3a0a24" $line="#b01c68" $color="#e0408c">Id</Tile> },
  { el: <Tile $bg="#04222c" $line="#1ca0c0" $color="#30c0e0">Ps</Tile> },
  { el: <Tile $bg="#2a1c05" $line="#b08420" $color="#e0a830">Br</Tile> },
  { el: <Svg><rect x="3" y="2" width="12" height="15" fill="#e8e8e8" stroke="#888" transform="rotate(-12 9 9)" /><path d="M6 9c2-2 4-1 6 2" stroke="#999" fill="none" strokeWidth="2" /></Svg> },
  { el: <Svg><path d="M3 2l3-1 3 5.500L12 1l3 1-4.500 7L15 16l-3 1-3-5.500L6 17l-3-1 4.500-7z" fill="#2e9c3c" /></Svg> },
  { el: <Svg><path d="M2.500 1h9l4 4v12h-13z" fill="#ececec" /><path d="M11.500 1l4 4h-4z" fill="#555" /></Svg> },
  { el: <Svg><rect x="3" y="2" width="12" height="14" fill="#eee" stroke="#888" transform="rotate(8 9 9)" /><path d="M5 6h8M5 8.500h8M5 11h6" stroke="#999" /><path d="M14 10 10 17" stroke="#c8a030" strokeWidth="1.500" /></Svg> },
  { el: <Svg><path d="M8 2h6l2 1v11l-8 1z" fill="#b81f28" /><path d="M2 8l6-2v10l-6 1z" fill="#e8e8e8" /><path d="M10 4h3v8h-3z" fill="#e08a8a" /></Svg> },
  { run: 1, el: <Svg><path d="M7 1h4v5l5 11H2L7 6z" fill="#b8b060" stroke="#777" /><path d="M5 12h8l3 5H2z" fill="#4a4a14" /><rect x="13" y="12" width="4" height="5" fill="#ddd" /></Svg> },
  { el: <Tile $bg="#111" $line="#888" $color="#ddd" $fs={7}>&gt;_</Tile> },
  { el: <Svg><rect x="3" y="3" width="12" height="13" fill="#ccc" stroke="#666" transform="rotate(-10 9 9)" /><circle cx="9" cy="9" r="3.500" fill="none" stroke="#666" strokeWidth="1.400" /></Svg> },
  { el: <Svg><path d="M9 1 13 13H5z" fill="#f08418" /><path d="M7 6h4l1 3H6z" fill="#fff" /><path d="M2 14h14l1.500 3H.500z" fill="#e8741a" /></Svg> },
  { el: <Svg><path d="M9 1 16 4.500V13L9 17 2 13V4.500z" fill="#3c6a90" /><path d="M2 4.500 9 8l7-3.500M9 8v9" stroke="#c8d8e8" fill="none" /></Svg> },
  { el: <Svg><circle cx="9" cy="9" r="8.500" fill="#e4e4e4" /><path d="M6 5c2-2 5-1 6 1v5c-1 2-1 3-2 4l-1-3-3-1z" fill="#888" /></Svg> },
  { el: <Svg><path d="M9 1 17 4v10l-8 3-8-3V4z" fill="#b8d8ea" /><path d="M1 4l8 3.500L17 4M9 7.500V17" stroke="#7aa8c4" fill="none" /></Svg> },
  { el: <Svg><path d="M3 10c-2-5 3-9 7-8 4 0 7 3 6 8-1 2-3 2-4 4H8c0-2-3-2-5-4z" fill="none" stroke="#b03080" strokeWidth="1.500" /><path d="M5 8c2-3 5-3 8 0M5 11c2-1 6-1 8-1" stroke="#38a048" fill="none" /><path d="M9 4v7" stroke="#e0a020" /></Svg> },
  { el: <Svg><ellipse cx="9" cy="9" rx="7.500" ry="8.500" fill="#d01820" /><ellipse cx="9" cy="9" rx="3.200" ry="6.500" fill="#1c0808" /></Svg> },
  { el: <Svg><circle cx="9" cy="9" r="8.500" fill="#f0f0f0" /><path d="M5 4l2 1.500h4L13 4v5c0 2-2 3-2 3v3H7v-3S5 11 5 9z" fill="#6c3c90" /></Svg> },
  { el: <Svg><path d="M9 1c4 2 5 6 3 9l-2 7H8l-1-7c-3-3-2-7 2-9z" fill="#d82828" /><path d="M4 8c3 0 5 2 6 8-3-1-6-4-6-8z" fill="#2c70c0" /><path d="M8 6h4v3H8z" fill="#fff" /></Svg> },
  { el: <Svg><circle cx="9" cy="9" r="8" fill="#2a5aa8" /><path d="M9 1c5 0 8 4 8 8s-3 8-8 8c-4 0-7-2-8-6 2 3 5 4 7 3s3-3 2-5C9 6 7 6 6 6c1-2 3-4 3-5z" fill="#f08020" /></Svg> },
  { el: <Svg><path d="M9 1 17 9l-5 8H6L1 9z" fill="#0e4d6a" /><path d="M9 4l1 5 2 3-1 4H7l1-4-2-2z" fill="#fff" /></Svg> },
  { el: <Svg><path d="M2 4c2-3 5-3 7-1 2-2 5-2 7 1 1 3-1 5-3 6v6H11l-1-5H8l-1 5H5v-6C3 9 1 7 2 4z" fill="#26547e" stroke="#4480b0" /><path d="M5 5c2-1 3 0 4 2 1-2 3-3 4-2" stroke="#6aa0d0" fill="none" /></Svg> },
  { el: <Svg><path d="M9 6c5-2 7 1 6 5-1 3-4 6-6 6s-5-3-6-6c-1-4 1-7 6-5z" fill="#d8232a" /><path d="M9 7 5 1l3 3 1-3 1 3 3-3z" fill="#3e9a3e" /></Svg> },
  { el: <Svg><circle cx="9" cy="5.500" r="4" fill="#f0c030" /><path d="M4 12c0-3 3-3.500 5-3.500 4 0 7-1 7 1 0 4-3 7.500-7 7.500-3 0-5-2-5-5z" fill="#eab020" /><path d="M12 5h3l-2.500 1.500z" fill="#d86a1a" /></Svg> },
  { el: <Tile $bg="#0aa3b8" $fs={15}>k</Tile> },
  { el: <Svg><path d="M1 3l2 12h2l2-8 2 8h2l2-12" fill="none" stroke="#1ca4cf" strokeWidth="2.500" /><path d="M17 4c-4-1-5 2-3 4s3 4-1 6" fill="none" stroke="#f07a20" strokeWidth="2.500" /></Svg> },
  { el: <Svg><rect x="3" y="2" width="13" height="15" fill="#ead97a" /><rect x="3" y="1" width="13" height="2.500" fill="#4a3a20" /><path d="M5 6h9M5 9h9M5 12h9" stroke="#b0a050" /></Svg> },
  { el: <Svg><ellipse cx="8" cy="7.500" rx="7.500" ry="6.500" fill="#2e90e0" /><path d="M3 11 2 16l5-3z" fill="#2e90e0" /><ellipse cx="12.500" cy="12" rx="5" ry="4" fill="#e4e4e4" /><path d="M10 12h5" stroke="#333" strokeDasharray="1 1" /></Svg> },
  { el: <Svg><rect x="2.500" y="1.500" width="14" height="15" fill="#f4f4f4" stroke="#333" strokeWidth="1.400" transform="rotate(-5 9 9)" /><path d="M5 5h1M8 5h6M5 8.500h1M8 8.500h6M5 12h1M8 12h6" stroke="#333" /></Svg> },
  { el: <Svg><path d="M5 16c0-6 2-12 8-15 2 4 1 9-1 11l-1 5z" fill="#d43b20" /><path d="M9 17c0-4 1-7 3-8v8z" fill="#999" /><path d="M3 9l4-4v3z" fill="#e8a030" /><rect x="5" y="13" width="7" height="4" fill="#8a8a8a" /></Svg> },
  { el: <Svg><path d="M2 6l10-3 1 11-10-3z" fill="#1c3a8a" /><ellipse cx="14" cy="9" rx="3" ry="5.500" fill="#2c50b0" stroke="#111" /><path d="M5 8l5-1" stroke="#88a0e0" /></Svg> },
  { el: <Svg><path d="M9 7 17 4v10l-8 3-8-3V4z" fill="#b0703c" /><path d="M9 7l8-3-8-2-8 2z" fill="#d8a070" /><path d="M7 1h4v3h2L9 8 5 4h2z" fill="#f09a20" /></Svg> },
  { el: <Tile $bg="#e04a30" $r={0}><Svg><circle cx="10" cy="10" r="4" fill="none" stroke="#fff" /><path d="M7 13 13 7M4 4h6v2H4z" stroke="#fff" fill="none" /></Svg></Tile> },
  { el: <Svg><path d="M1 4l11-3 5 3-1 10-11 3-4-3z" fill="#2c90d8" /><path d="M4 12 13 5M8 15l5-8" stroke="#cfe8f8" /></Svg> },
  { el: <Svg><path d="M1 3l2.500 12h2L8 8l2.500 7h2L16 3" fill="none" stroke="#1f9ad8" strokeWidth="3" /></Svg> },
  { el: <Tile $bg="linear-gradient(#e0e0e0,#888)"><Svg><path d="M4 3l3 12M9 3l2 12M6 7l7-3M6 11l8-2M13 3v12" stroke="#222" strokeWidth="1.300" /></Svg></Tile> },
  { run: 1, el: <Tile $bg="#f4f8ff" $r={3}><Svg><circle cx="9" cy="9" r="6.500" fill="#0e6dd0" /><path d="M3 9l4-3v2h4V6l4 3-4 3v-2H7v2z" fill="#fff" /></Svg></Tile> },
  { el: <Svg><path d="M9 1a8 8 0 0 1 7 4H9a4 4 0 0 0-3.500 2L3 3a8 8 0 0 1 6-2z" fill="#e03a2e" /><path d="M16 5a8 8 0 0 1-6 12l3-5a4 4 0 0 0 0-7z" fill="#f6c52a" /><path d="M10 17a8 8 0 0 1-7-14l3 5a4 4 0 0 0 4 5 3 3 0 0 0 2-.5z" fill="#3aa648" /><circle cx="9" cy="9" r="3.500" fill="#3f7fe8" stroke="#fff" /></Svg> },
  { run: 1, ml: 11, el: <Svg><path d="M3 1h9l3 3v13H3z" fill="#e8e8e8" /><circle cx="9" cy="10" r="3" fill="#3c6ec0" /></Svg> },
  { el: <Svg><path d="M3 3h12l-1.500 14h-9z" fill="#8a8a8a" stroke="#444" /><ellipse cx="9" cy="3" rx="6" ry="1.600" fill="#c8c8c8" stroke="#555" /><path d="M6 6l1 9M9 6v9M12 6l-1 9" stroke="#555" /></Svg> },
];

const App = () => {
  const hLabels = [700, 600, 500, 400, 300, 200, 100, 0, 100, 200, 300, 400, 500, 600, 700, 800, 900, 1000, 1100, 1200, 1300, 1400, 1500, 1600, 1700, 1800, 1900];
  const vLabels = [200, 100, 0, 100, 200, 300, 400, 500, 600, 700, 800, 900, 1000, 1100, 1200, 1300, 1400, 1500, 1600];

  return (
    <Page>
      <GlobalStyle />
      <MenuBar>
        <FaApple size={17} color="#333" />
        <MenuList>
          <AppName>Photoshop</AppName>
          {["Fichier", "Edition", "Image", "Calque", "Texte", "Sélection", "Filtre", "Affichage", "Fenêtre", "Aide"].map((m) => (
            <span key={m}>{m}</span>
          ))}
        </MenuList>
        <Tray>
          <TrayItem $gap={0} $color="#8c8c8c"><SiAdobecreativecloud size={20} /></TrayItem>
          <TrayItem $gap={13}>
            <svg width="19" height="14" viewBox="0 0 19 14"><path d="M3 11H1V1h17v10h-2" fill="none" stroke="#111" strokeWidth="2" /><path d="M9.500 5 15 14H4z" fill="#111" /></svg>
          </TrayItem>
          <TrayItem $gap={13}>
            <svg width="18" height="12" viewBox="0 0 18 12"><rect width="18" height="12" rx="3" fill="#222" /><path d="M4 3v6M6.500 3v6M9 3v6M11.500 3v6M14 3v6" stroke="#bbb" /></svg>
          </TrayItem>
          <TrayItem $gap={13} $color="#8c8c8c"><History size={16} /></TrayItem>
          <TrayItem $gap={14} $color="#9a9a9a"><FaBluetoothB size={13} /></TrayItem>
          <TrayItem $gap={15}><FaWifi size={21} /></TrayItem>
          <TrayItem $gap={6}><FaVolumeOff size={15} /></TrayItem>
          <TrayItem $gap={21}>
            <Flag />
            <MiniFlag />
          </TrayItem>
          <TrayItem $gap={13}><Percent>37 %</Percent></TrayItem>
          <TrayItem $gap={5}>
            <svg width="21" height="11" viewBox="0 0 21 11"><rect x=".7" y=".7" width="17.600" height="9.600" rx="2" fill="none" stroke="#222" strokeWidth="1.400" /><rect x="3" y="3" width="6" height="5" fill="#222" /><rect x="19" y="3.500" width="2" height="4" fill="#222" /></svg>
          </TrayItem>
          <TrayItem $gap={13}>sam. 09:40</TrayItem>
          <TrayItem $gap={18}><FaSearch size={14} /></TrayItem>
          <TrayItem $gap={15}>
            <svg width="21" height="12" viewBox="0 0 21 12"><path d="M0 1.500h3M6 1.500h15M0 6h3M6 6h15M0 10.500h3M6 10.500h15" stroke="#111" strokeWidth="2" /></svg>
          </TrayItem>
        </Tray>
      </MenuBar>

      <Desktop>
        <Edge />
        <Window>
          <TitleBar>
            <Lights>
              <Light $c1="#ff8f80" $c2="#d8281e" />
              <Light $c1="#ffd58a" $c2="#e09018" />
              <Light $c1="#a8f090" $c2="#42a83a" />
            </Lights>
            Adobe Photoshop CS6
          </TitleBar>
          <OptionsBar>
            <Grip />
            {toolIcons.move}
            <DownArrow width="6" height="4" viewBox="0 0 6 4"><path d="M0 0h6L3 4z" fill="#d0d0d0" /></DownArrow>
            <OptSep $left={6} $right={8} />
            <Check />
            <OptLabel $w={102}>Sélection automatique :</OptLabel>
            <Select $w={56} $ml="6px">Groupe <Stepper /></Select>
            <OptSep $left={6} $right={6} />
            <Check />
            <OptLabel $w={78}>Options de transf.</OptLabel>
            <OptSep $left={6} $right={8} />
            <IconGroup $gap={9}>
              {alignSet.map((a, i) => <AlignIcon key={i} parts={a} />)}
            </IconGroup>
            <OptSep $left={8} $right={7} />
            <IconGroup $gap={8}>
              {distH.map((a, i) => <AlignIcon key={i} parts={a} />)}
            </IconGroup>
            <IconGroup $gap={8} $ml={14}>
              {distV.map((a, i) => <AlignIcon key={i} parts={a} />)}
            </IconGroup>
            <OptSep $left={6} $right={8} />
            <AlignIcon parts={[["o", 0.5, 6.5, 4, 8], ["f", 0, 1, 5, 4], ["l", 7.5, 1, 7.5, 15], ["f", 10, 1, 5, 4], ["o", 10.5, 6.5, 4, 8]]} />
            <OptSep $left={9} $right={0} />
            <Select $w={159} $ml="auto" $mr="3px">Photographie <Stepper /></Select>
          </OptionsBar>

          <Workspace>
            <Toolbox>
              <ToolHead><Collapse /></ToolHead>
              <ToolGrip />
              <Tools rows={toolRows} />
              <ToolDivider $mt={1} $mb={1} />
              <Tools rows={toolRows2} />
              <ToolDivider $mt={0} $mb={1} />
              <Tools rows={toolRows3} />
              <ToolDivider $mt={1} $mb={1} />
              <Tools rows={toolRows4} />
              <Swatches>
                <Swatch $x={28} $y={17} $c="#fff" />
                <Swatch $x={13} $y={1} $c="#000" />
                <SwatchMark $x={44} $y={-1}>
                  <svg width="11" height="12" viewBox="0 0 11 12" fill="none" stroke="#cfcfcf"><path d="M1 3h5a3 3 0 0 1 3 3v4" /><path d="M0 3l3-2v4zM9 12 7 9.500h4z" fill="#cfcfcf" /></svg>
                </SwatchMark>
                <SwatchMark $x={11} $y={32}>
                  <svg width="11" height="11" viewBox="0 0 11 11"><rect x="3" y="3" width="7" height="7" fill="#ddd" stroke="#333" /><rect x=".5" y=".5" width="6" height="6" fill="#111" stroke="#ccc" /></svg>
                </SwatchMark>
              </Swatches>
              <ModeRow>
                <svg width="17" height="13" viewBox="0 0 17 13"><rect x=".5" y=".5" width="16" height="12" fill="#6c6c6c" stroke="#cfcfcf" /><circle cx="8.500" cy="6.500" r="3.500" fill="none" stroke="#e4e4e4" strokeDasharray="1 1" /></svg>
                <Tool $more>
                  <svg width="17" height="13" viewBox="0 0 17 13"><rect x="5.500" y=".5" width="11" height="8" fill="#8a8a8a" stroke="#c4c4c4" /><rect x=".5" y="4.500" width="11" height="8" fill="#4c4c4c" stroke="#c4c4c4" /></svg>
                </Tool>
              </ModeRow>
            </Toolbox>

            <Main>
              <DocTabs>
                <DocTab><CloseX />test.psd @ 33.3% (No 1, CMJN/8)</DocTab>
              </DocTabs>
              <HRuler>
                <Corner />
                <HCell $w={19} $bare />
                {hLabels.map((n, i) => <HCell key={i}>{n}</HCell>)}
                <Marker $x={525} $y={0} $w={1} $h={16} />
              </HRuler>
              <Body>
                <VRuler>
                  {vLabels.map((n, i) => (
                    <VCell key={i}>
                      {String(n).split("").map((d, k) => <Digit key={k}>{d}</Digit>)}
                    </VCell>
                  ))}
                  <Marker $x={0} $y={178} $w={16} $h={1} />
                </VRuler>
                <Canvas>
                  <Sheet>No 1</Sheet>
                </Canvas>
              </Body>
              <StatusBar>
                <Zoom>33.33 %</Zoom>
                <StatusBtn $w={23}>
                  <svg width="12" height="11" viewBox="0 0 12 11"><rect width="12" height="11" rx="3" fill="#bcbcbc" /><path d="M3 2h4l2 2v5H3z" fill="#444" /></svg>
                </StatusBtn>
                <StatusText>ISO Coated v2 300% (ECI) (8bpc)</StatusText>
                <StatusBtn $w={11} $bg="#4e4e4e">
                  <svg width="6" height="9" viewBox="0 0 6 9"><path d="M0 0l6 4.500L0 9z" fill="#e0e0e0" /></svg>
                </StatusBtn>
              </StatusBar>
            </Main>
          </Workspace>
        </Window>
      </Desktop>

      <Dock>
        <Shelf />
        {dockIcons.map((d, i) => (
          <Dk key={i} $run={d.run} $ml={d.ml}>{d.el}</Dk>
        ))}
      </Dock>

      {/* history panel behind */}
      <Float $x={1068} $y={75} $w={212} $h={261}>
        <PanelTitle><CloseX /></PanelTitle>
        <TabBar $h={16}>
          <Tab $w={62} $on>Historique</Tab>
          <Tab $w={45}>Actions</Tab>
        </TabBar>
        <Rows>
          <HistRow $h={34} />
          <HistRow />
          <HistRow />
          <HistRow />
          <HistRow />
          <HistRow>Texte</HistRow>
          <HistRow />
          <HistRow $on>Texte</HistRow>
        </Rows>
        <BackFoot>
          <svg width="15" height="14" viewBox="0 0 15 14"><path d="M5 1h7l2 2v9H5z" fill="#c8c8c8" /><path d="M4 6v7M0 9.500h8" stroke="#4c4c4c" strokeWidth="3" /><path d="M4 6v7M0 9.500h8" stroke="#ddd" strokeWidth="1.500" /></svg>
          <svg width="16" height="13" viewBox="0 0 16 13"><path d="M0 3h4l1-2h5l1 2h5v10H0z" fill="#c8c8c8" /><circle cx="8" cy="8" r="3" fill="#4c4c4c" /><circle cx="8" cy="8" r="1.500" fill="#c8c8c8" /></svg>
        </BackFoot>
      </Float>

      {/* informations */}
      <Float $x={953} $y={94} $w={270} $h={244}>
        <PanelTitle><CloseX /><Collapse /></PanelTitle>
        <TabBar>
          <Tab $w={62}>Propriétés</Tab>
          <Tab $w={73} $on>Informations</Tab>
          <TabMenu><MenuGlyph /></TabMenu>
        </TabBar>
        <InfoSection $h={69}>
          <InfoCell $w={135} $div $pad="7px 0 0 9px">
            <IconSlot $w={12} $top={3}><Dropper /></IconSlot>
            <InfoRows $cols="24px 69px">
              <Lab>C :</Lab><Val>0 %</Val>
              <Lab>M :</Lab><Val>0 %</Val>
              <Lab>J :</Lab><Val>0 %</Val>
              <Lab>N :</Lab><Val>0 %</Val>
              <Lab>8 bits</Lab><div />
            </InfoRows>
          </InfoCell>
          <InfoCell $w={130} $pad="9px 0 0 7px">
            <IconSlot $w={26} $top={3}><Dropper /></IconSlot>
            <InfoRows $cols="11px 69px">
              <Lab>Σ :</Lab><Val>0 %</Val>
            </InfoRows>
          </InfoCell>
        </InfoSection>
        <InfoSection $h={34}>
          <InfoCell $w={135} $div $pad="4px 0 0 7px">
            <IconSlot $w={14}><Plus /></IconSlot>
            <InfoRows $cols="24px 64px">
              <Lab>X :</Lab><Val>764</Val>
              <Lab>Y :</Lab><Val>336</Val>
            </InfoRows>
          </InfoCell>
          <InfoCell $w={130} $pad="6px 0 0 7px">
            <IconSlot $w={20}><SizeGlyph /></IconSlot>
            <InfoRows $cols="17px 30px">
              <Lab>L  :</Lab><div />
              <Lab>H  :</Lab><div />
            </InfoRows>
          </InfoCell>
        </InfoSection>
        <InfoSection $h={28}>
          <DocLine>Doc : 11.4 Mo/255.9 Ko</DocLine>
        </InfoSection>
        <HelpText>
          Faites glisser pour contraindre le déplacement du calque
          <br />
          ou de la sélection à un angle multiple de 45°.
        </HelpText>
        <ResizeGrip><GripDots /></ResizeGrip>
      </Float>

      {/* histogramme */}
      <Float $x={953} $y={350} $w={270} $h={47}>
        <PanelTitle><CloseX /><Collapse /></PanelTitle>
        <TabBar>
          <Tab $w={64}>Navigation</Tab>
          <Tab $w={75} $on>Histogramme</Tab>
          <TabMenu><MenuGlyph /></TabMenu>
        </TabBar>
        <HistBox />
      </Float>

      {/* calques */}
      <Float $x={953} $y={397} $w={279} $h={358}>
        <PanelTitle><CloseX /><Collapse /></PanelTitle>
        <TabBar>
          <Tab $w={50} $on>Calques</Tab>
          <Tab $w={52}>Couches</Tab>
          <Tab $w={45}>Tracés</Tab>
          <TabMenu><MenuGlyph /></TabMenu>
        </TabBar>
        <LayerRow $h={28} $line>
          <Select $w={85}>
            <SearchGlyph width="10" height="10" viewBox="0 0 10 10" fill="none" stroke="#e0e0e0"><circle cx="6" cy="4" r="3" /><path d="M4 6 1 9" /></SearchGlyph>
            <SelectName>Type</SelectName>
            <Stepper />
          </Select>
          <FilterIcons>
            <FilterCell><svg width="16" height="13" viewBox="0 0 16 13"><rect x=".5" y=".5" width="15" height="12" fill="none" stroke="#b4b4b4" /><path d="M2 10l4-4 2 2 3-3 3 5z" fill="#b4b4b4" /></svg></FilterCell>
            <FilterCell><svg width="13" height="13" viewBox="0 0 13 13"><circle cx="6.500" cy="6.500" r="6" fill="#c8c8c8" /><path d="M6.500.5a6 6 0 0 1 0 12c-2 0-3-.5-4-2z" fill="#555" /></svg></FilterCell>
            <FilterCell><SerifT $size={15}>T</SerifT></FilterCell>
            <FilterCell><svg width="14" height="14" viewBox="0 0 14 14" fill="#b4b4b4"><rect x="2.500" y="2.500" width="9" height="9" fill="none" stroke="#b4b4b4" /><rect width="3" height="3" /><rect x="11" width="3" height="3" /><rect y="11" width="3" height="3" /><rect x="11" y="11" width="3" height="3" /></svg></FilterCell>
            <FilterCell><svg width="14" height="14" viewBox="0 0 14 14"><path d="M4 .5h6l3 3v9H4z" fill="none" stroke="#b4b4b4" /><rect x="0" y="6" width="7" height="8" fill="#b4b4b4" /></svg></FilterCell>
          </FilterIcons>
          <FilterToggle />
        </LayerRow>
        <LayerRow $h={28} $line>
          <Select $w={165}>Normal <Stepper /></Select>
          <FieldLabel $w={39}>Opacité :</FieldLabel>
          <Field>
            <FieldVal>100 %</FieldVal>
            <FieldBtn><FieldArrow /></FieldBtn>
          </Field>
        </LayerRow>
        <LayerRow $h={28}>
          <FieldLabel $ml="0" $w={35}>Verrou :</FieldLabel>
          <LockIcons>
            <LockCell><svg width="12" height="12" viewBox="0 0 12 12"><rect width="12" height="12" fill="#7a7a7a" /><path d="M0 0h3v3H0zM6 0h3v3H6zM3 3h3v3H3zM9 3h3v3H9zM0 6h3v3H0zM6 6h3v3H6zM3 9h3v3H3zM9 9h3v3H9z" fill="#969696" /></svg></LockCell>
            <LockCell><svg width="17" height="14" viewBox="0 0 17 14"><path d="M16 0 7 8l2 2z" fill="#9a9a9a" /><path d="M6 8c-2 0-3 2-3 3l-3 2c3 1 7 1 9-2z" fill="#9a9a9a" /></svg></LockCell>
            <LockCell><svg width="14" height="14" viewBox="0 0 14 14" fill="#c8c8c8"><path d="M7 1v12M1 7h12" stroke="#c8c8c8" /><path d="M7 0 5 2.500h4zM7 14l-2-2.500h4zM0 7l2.500-2v4zM14 7l-2.500-2v4z" /></svg></LockCell>
            <LockCell><FaLock size={11} color="#c8c8c8" /></LockCell>
          </LockIcons>
          <FieldLabel $ml="auto" $w={27}>Fond :</FieldLabel>
          <Field>
            <FieldVal>100 %</FieldVal>
            <FieldBtn><FieldArrow /></FieldBtn>
          </Field>
        </LayerRow>
        <ListArea>
          <List>
            <Layer $h={39}>
              <EyeCol $top={15}><Eye /></EyeCol>
              <LayerMain $pad={1} $gap={6} $bg="#58657a">
                <Thumb $w={36} $h={36} $bg="#58657a">
                  <SerifT $size={24} $bold $color="#b8c0cc">T</SerifT>
                  <Brackets width="36" height="36" viewBox="0 0 36 36" fill="none" stroke="#fff">
                    <path d="M.5 9V.5H10M26 .5h9.500V9M.5 27v8.500H10M26 35.500h9.500V27" />
                  </Brackets>
                </Thumb>
                No 1
              </LayerMain>
            </Layer>
            <Layer $h={33}>
              <EyeCol $top={12}><Eye /></EyeCol>
              <LayerMain $pad={3} $gap={8} $italic>
                <Thumb $w={32} $h={26} $bg="#fff" $line />
                Arrière-plan
                <LayerLock><FaLock size={10} /></LayerLock>
              </LayerMain>
            </Layer>
          </List>
          <Track />
        </ListArea>
        <LayerFoot>
          <FootCell><svg width="14" height="9" viewBox="0 0 14 9" fill="none" stroke="#8a8a8a" strokeWidth="1.400"><rect x=".7" y=".7" width="7" height="7" rx="3" /><rect x="6" y=".7" width="7" height="7" rx="3" /></svg></FootCell>
          <FootCell><FootFx>fx</FootFx></FootCell>
          <FootCell><svg width="14" height="12" viewBox="0 0 14 12"><rect width="14" height="12" fill="#b4b4b4" /><circle cx="7" cy="6" r="3" fill="#444" /></svg></FootCell>
          <FootCell><svg width="14" height="13" viewBox="0 0 14 13"><circle cx="6.500" cy="6.500" r="6" fill="#b4b4b4" /><path d="M10 2 3 11c-2-3-1-8 3-9.500z" fill="#555" /></svg></FootCell>
          <FootCell><svg width="14" height="12" viewBox="0 0 14 12"><path d="M0 0h5l1 2h8v10H0z" fill="#b4b4b4" /></svg></FootCell>
          <FootCell><svg width="12" height="12" viewBox="0 0 12 12"><path d="M3 0h9v12H5V8H0V3z" fill="#b4b4b4" /></svg></FootCell>
          <FootCell><svg width="12" height="13" viewBox="0 0 12 13" fill="none" stroke="#b4b4b4"><path d="M0 2.500h12M4 2.500V.5h4v2M2 2.500v10h8v-10M4.500 5v6M7.500 5v6" /></svg></FootCell>
        </LayerFoot>
        <Handle />
        <ResizeGrip $bottom={10}><GripDots /></ResizeGrip>
      </Float>
    </Page>
  );
};

export default App;
